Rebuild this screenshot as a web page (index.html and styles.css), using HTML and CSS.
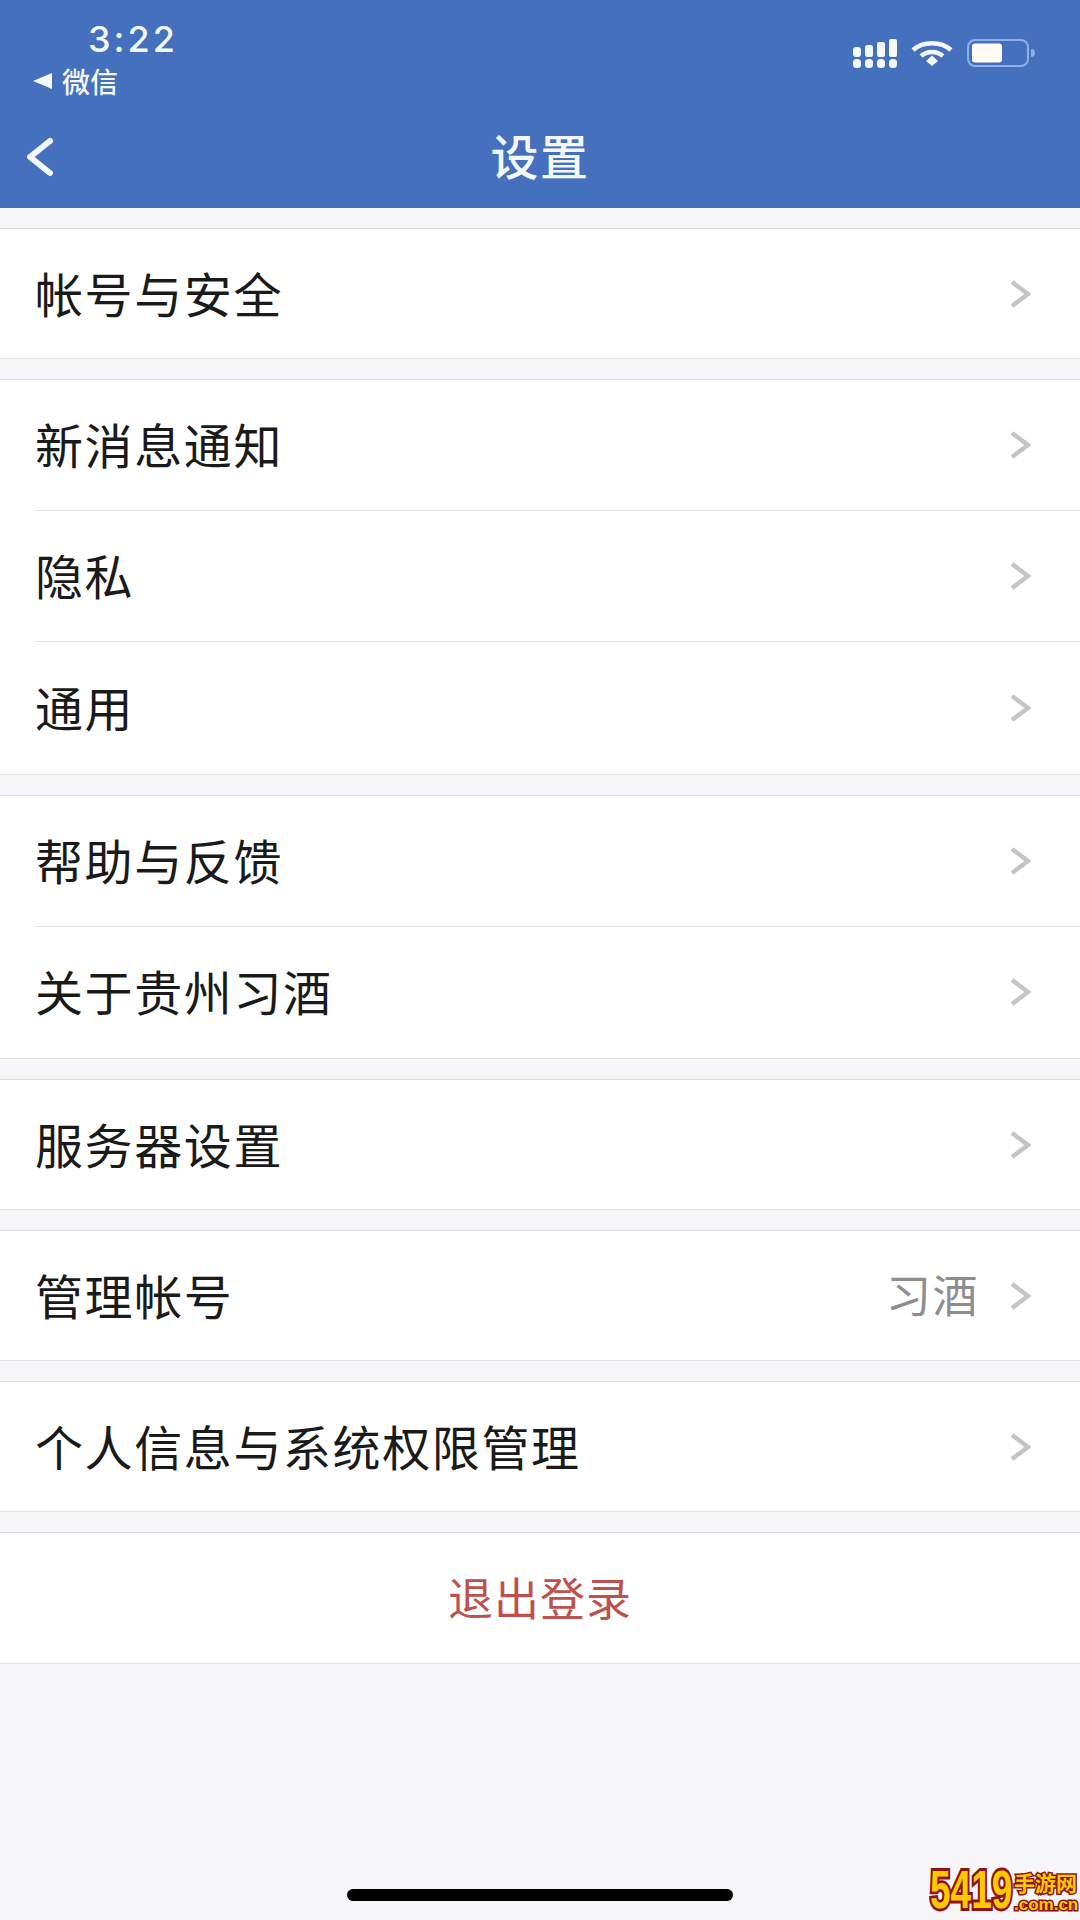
FILE: index.html
```html
<!DOCTYPE html>
<html lang="zh-CN">
<head>
    <meta charset="UTF-8">
    <meta name="viewport" content="width=device-width, initial-scale=1.0">
    <title>设置</title>
    <link rel="stylesheet" href="styles.css">
</head>
<body>
    <div class="page">
        <header class="header">
            <div class="status-bar">
                <div class="status-left">
                    <div class="time">3:22</div>
                    <div class="back-app"><span class="back-arrow"></span>微信</div>
                </div>
                <div class="status-right">
                    <svg class="icon-signal" width="44" height="29" viewBox="0 0 44 29" fill="#f4f7fc">
                        <rect x="0" y="8" width="8" height="10" rx="3"/>
                        <rect x="12" y="6" width="8" height="12" rx="2.5"/>
                        <rect x="24" y="3" width="8" height="15" rx="2"/>
                        <rect x="36" y="0" width="8" height="18" rx="2"/>
                        <rect x="0" y="20" width="8" height="9" rx="3.5"/>
                        <rect x="12" y="20" width="8" height="9" rx="3.5"/>
                        <rect x="24" y="20" width="8" height="9" rx="3.5"/>
                        <rect x="36" y="20" width="8" height="9" rx="3.5"/>
                    </svg>
                    <svg class="icon-wifi" width="42" height="26" viewBox="0 0 42 26" fill="none" stroke="#f4f7fc" stroke-width="4.5">
                        <path d="M2 10 C12 1 30 1 40 10"/>
                        <path d="M10 16 C16 10.500 26 10.500 32 16"/>
                        <path d="M15 21 L21 15.500 L27 21 L21 26 Z" fill="#f4f7fc" stroke="none"/>
                    </svg>
                    <svg class="icon-battery" width="69" height="28" viewBox="0 0 69 28" fill="none">
                        <rect x="1" y="1" width="60" height="26" rx="7" stroke="#8fb0e6" stroke-width="2"/>
                        <rect x="5" y="4.500" width="30" height="19" rx="3" fill="#fdfbf2"/>
                        <path d="M64 10 C67 10 68 12 68 14 C68 16 67 18 64 18 Z" fill="#8fb0e6"/>
                    </svg>
                </div>
            </div>
            <div class="nav-bar">
                <svg class="nav-back" width="28" height="40" viewBox="0 0 28 40" fill="none" stroke="#f4f7fc" stroke-width="6" stroke-linecap="round" stroke-linejoin="round">
                    <path d="M24 4 L4 20 L24 36"/>
                </svg>
                <h1 class="nav-title">设置</h1>
            </div>
        </header>

        <main class="content">
            <section class="group">
                <div class="row"><span class="row-label">帐号与安全</span><svg class="chevron" width="22" height="30" viewBox="0 0 22 30"><path d="M3 3 L19 15 L3 27"/></svg></div>
            </section>

            <section class="group">
                <div class="row"><span class="row-label">新消息通知</span><svg class="chevron" width="22" height="30" viewBox="0 0 22 30"><path d="M3 3 L19 15 L3 27"/></svg></div>
                <div class="row"><span class="row-label">隐私</span><svg class="chevron" width="22" height="30" viewBox="0 0 22 30"><path d="M3 3 L19 15 L3 27"/></svg></div>
                <div class="row"><span class="row-label">通用</span><svg class="chevron" width="22" height="30" viewBox="0 0 22 30"><path d="M3 3 L19 15 L3 27"/></svg></div>
            </section>

            <section class="group">
                <div class="row"><span class="row-label">帮助与反馈</span><svg class="chevron" width="22" height="30" viewBox="0 0 22 30"><path d="M3 3 L19 15 L3 27"/></svg></div>
                <div class="row"><span class="row-label">关于贵州习酒</span><svg class="chevron" width="22" height="30" viewBox="0 0 22 30"><path d="M3 3 L19 15 L3 27"/></svg></div>
            </section>

            <section class="group">
                <div class="row"><span class="row-label">服务器设置</span><svg class="chevron" width="22" height="30" viewBox="0 0 22 30"><path d="M3 3 L19 15 L3 27"/></svg></div>
            </section>

            <section class="group">
                <div class="row"><span class="row-label">管理帐号</span><span class="row-value">习酒</span><svg class="chevron" width="22" height="30" viewBox="0 0 22 30"><path d="M3 3 L19 15 L3 27"/></svg></div>
            </section>

            <section class="group">
                <div class="row"><span class="row-label">个人信息与系统权限管理</span><svg class="chevron" width="22" height="30" viewBox="0 0 22 30"><path d="M3 3 L19 15 L3 27"/></svg></div>
            </section>

            <section class="group">
                <div class="logout">退出登录</div>
            </section>
        </main>

        <div class="home-indicator"></div>

        <!-- site watermark -->
        <div class="watermark">
            <span class="wm-num">5419</span>
            <span class="wm-side">
                <span class="wm-cn">手游网</span>
                <span class="wm-url">.com.cn</span>
            </span>
        </div>
    </div>
</body>
</html>
```

FILE: styles.css
```css
* {
    box-sizing: border-box;
}

body {
    margin: 0;
    background-color: #f6f6f9;
    font-family: "Noto Sans CJK SC", "Liberation Sans", sans-serif;
}

.page {
    position: relative;
    width: 1080px;
    height: 1920px;
    overflow: hidden;
    background-color: #f6f6f9;
}

/* Header */
.header {
    height: 208px;
    background-color: #4570bd;
    color: #f4f7fc;
}

.status-bar {
    height: 105px;
    padding: 20px 44px 0 33px;
    display: flex;
    justify-content: space-between;
}

.time {
    margin-left: 55px;
    font-family: Inter, sans-serif;
    font-size: 36px;
    font-weight: 500;
    line-height: 38px;
    letter-spacing: 3px;
}

.back-app {
    display: flex;
    align-items: center;
    margin-top: 4px;
    font-size: 28px;
    font-weight: 500;
    line-height: 38px;
}

.back-arrow {
    width: 0;
    height: 0;
    margin-right: 10px;
    border-top: 8px solid transparent;
    border-bottom: 8px solid transparent;
    border-right: 19px solid #f4f7fc;
}

.status-right {
    display: flex;
    align-items: flex-start;
    gap: 14px;
    padding-top: 19px;
}

.icon-wifi {
    margin-top: 1px;
}

.nav-bar {
    position: relative;
    height: 97px;
    display: flex;
    align-items: center;
    justify-content: center;
}

.nav-back {
    position: absolute;
    left: 26px;
    top: 32px;
}

.nav-title {
    margin: 0;
    font-size: 48px;
    font-weight: 500;
    line-height: 60px;
    letter-spacing: 1.5px;
}

/* Settings list */
.content {
    display: flex;
    flex-direction: column;
    gap: 20px;
    padding-top: 20px;
}

.group {
    background-color: #fff;
    border-top: 1px solid #dcdcdf;
    border-bottom: 1px solid #e2e2e5;
}

.row {
    height: 131px;
    margin-left: 35px;
    padding-right: 49px;
    display: flex;
    align-items: center;
    border-bottom: 1px solid #e4e4e6;
}

.row:last-child {
    height: 131.5px;
    border-bottom: none;
}

.row:only-child {
    height: 129px;
}

.row-label {
    flex: 1;
    margin-bottom: 4px;
    color: #1a1a1a;
    font-size: 48px;
    letter-spacing: 1.6px;
}

.row-value {
    margin: 0 30px 4px 0;
    color: #8e8e90;
    font-size: 45px;
    letter-spacing: 1.5px;
}

.chevron {
    fill: none;
    stroke: #c4c4c6;
    stroke-width: 4.5;
}

.logout {
    height: 130px;
    padding-bottom: 4px;
    display: flex;
    align-items: center;
    justify-content: center;
    color: #c0504d;
    font-size: 45px;
    letter-spacing: 1px;
}

/* Overlays */
.home-indicator {
    position: absolute;
    left: 347px;
    top: 1889px;
    width: 386px;
    height: 12px;
    border-radius: 6px;
    background-color: #000;
}

.watermark {
    position: absolute;
    left: 930px;
    top: 1864px;
    width: 150px;
    height: 54px;
    display: flex;
    align-items: center;
    font-family: "Liberation Sans", "Noto Sans CJK SC", sans-serif;
    font-weight: 700;
    color: #ffc800;
}

.wm-num {
    display: inline-block;
    width: 84px;
    font-size: 37px;
    line-height: 54px;
    transform: scaleY(1.45);
    -webkit-text-stroke: 4px #8c1414;
    paint-order: stroke fill;
}

.wm-side {
    display: flex;
    flex-direction: column;
    -webkit-text-stroke: 3px #8c1414;
    paint-order: stroke fill;
}

.wm-cn {
    font-size: 21px;
    line-height: 28px;
    font-family: "Noto Sans CJK SC", sans-serif;
}

.wm-url {
    font-size: 17px;
    line-height: 18px;
}
```
